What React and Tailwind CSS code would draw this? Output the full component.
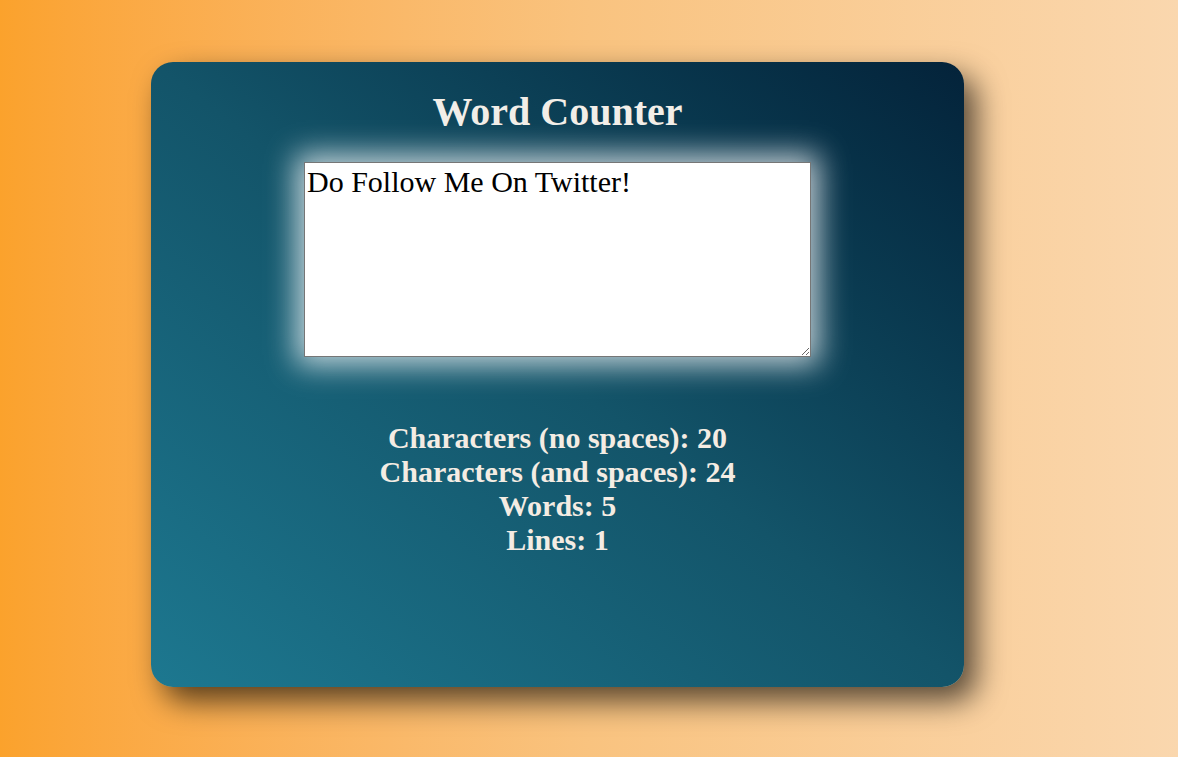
import { useState } from "react";

const serif = { fontFamily: '"Liberation Serif", "Times New Roman", serif' };

const App = () => {
  const [text, setText] = useState("Do Follow Me On Twitter!");

  const noSpaces = text.replace(/\s/g, "").length;
  const words = text.trim() ? text.trim().split(/\s+/).length : 0;
  const lines = text ? text.split("\n").length : 0;

  return (
    <div
      className="min-h-[757px] w-full bg-gradient-to-r from-[#fba22c] via-[#f9c37f] to-[#fad7ae] pt-[62px] pl-[151px]"
      style={serif}
    >
      <div className="w-[813px] h-[625px] rounded-[22px] bg-gradient-to-tr from-[#1d7890] via-[#135469] to-[#04233a] shadow-[12px_14px_30px_rgba(0,0,0,0.65)] flex flex-col items-center pt-[27px]">
        <h1 className="text-[40px] font-bold leading-[46px] text-[#f2eee8]">
          Word Counter
        </h1>
        <textarea
          value={text}
          onChange={(e) => setText(e.target.value)}
          className="mt-[27px] w-[507px] h-[195px] bg-white border border-[#767676] text-[30px] leading-[34px] text-black p-[2px] shadow-[0_0_28px_8px_rgba(255,255,255,0.75)] outline-none"
          style={serif}
        />
        <div className="mt-[64px] flex flex-col items-center text-[30px] font-bold leading-[34px] text-[#f4ece3]">
          <div>Characters (no spaces): {noSpaces}</div>
          <div>Characters (and spaces): {text.length}</div>
          <div>Words: {words}</div>
          <div>Lines: {lines}</div>
        </div>
      </div>
    </div>
  );
};

export default App;
